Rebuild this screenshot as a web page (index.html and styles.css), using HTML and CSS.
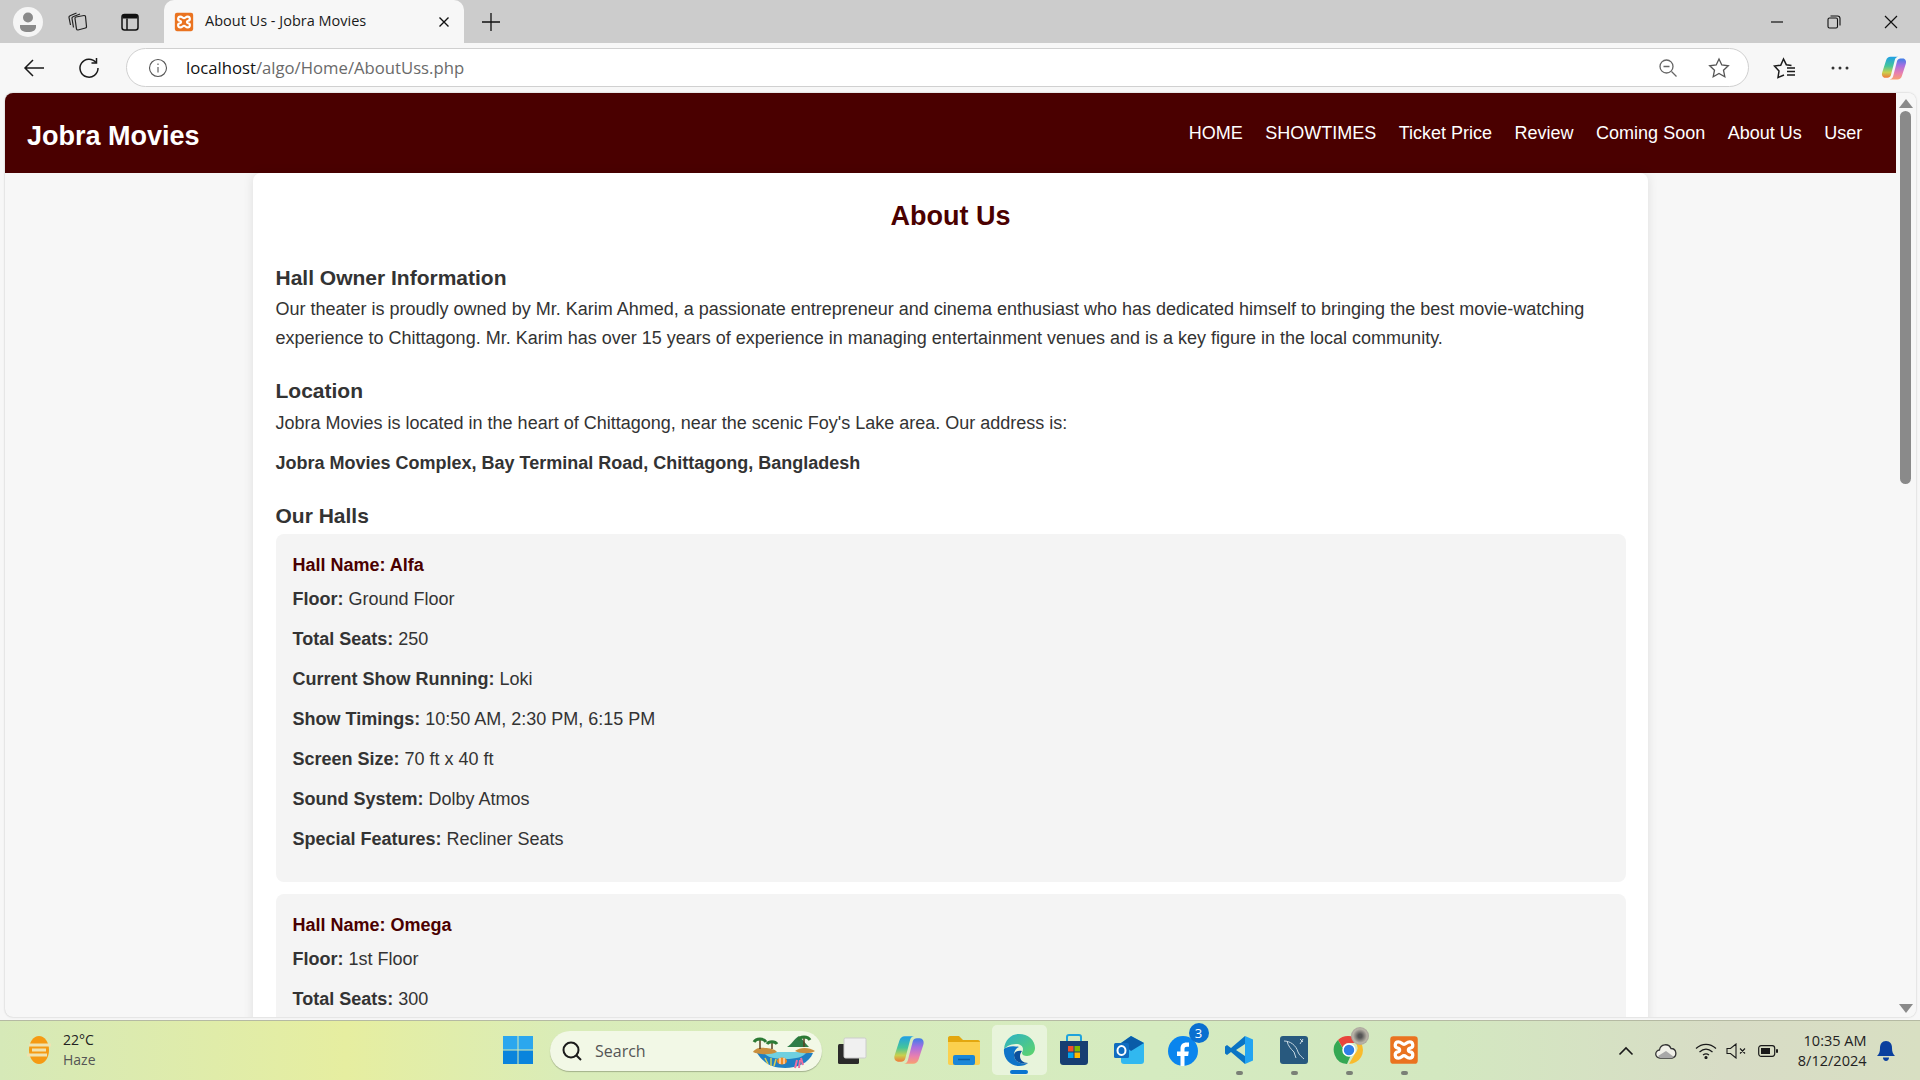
FILE: index.html
```html
<!DOCTYPE html>
<html lang="en">
<head>
    <meta charset="UTF-8">
    <meta name="viewport" content="width=device-width, initial-scale=1.0">
    <title>About Us - Jobra Movies</title>
    <link rel="stylesheet" href="styles.css">
</head>
<body>
    <svg class="defs" width="0" height="0">
        <defs>
            <symbol id="xampp" viewBox="0 0 24 24">
                <rect x="1" y="1" width="22" height="22" rx="2.500" fill="#ea7320"/>
                <path d="M7.500 5.500c2.500 0 2.800 2 4.500 2s2-2 4.500-2c3 0 3.500 4.500.5 5-1 .2-1.500.7-1.500 1.500s.5 1.300 1.500 1.500c3 .5 2.500 5-.5 5-2.500 0-2.800-2-4.500-2s-2 2-4.500 2c-3 0-3.500-4.500-.5-5 1-.2 1.500-.7 1.500-1.500s-.5-1.300-1.500-1.500c-3-.5-2.500-5 .5-5z" fill="none" stroke="#fff" stroke-width="2.600"/>
            </symbol>
            <linearGradient id="copA" x1="0" y1="0" x2="0" y2="1">
                <stop offset="0" stop-color="#1f9fe6"/><stop offset=".45" stop-color="#45c59a"/><stop offset=".75" stop-color="#c8d14e"/><stop offset="1" stop-color="#f07a3a"/>
            </linearGradient>
            <linearGradient id="copB" x1="0" y1="0" x2="0" y2="1">
                <stop offset="0" stop-color="#3d7fe8"/><stop offset=".35" stop-color="#a86fe0"/><stop offset=".7" stop-color="#e87fb0"/><stop offset="1" stop-color="#f8a070"/>
            </linearGradient>
            <symbol id="copilot" viewBox="0 0 32 32">
                <path d="M12 3h9c-2 0-3.500 1.500-4 3.500L12.500 24c-.6 2-2 3-4 3H6c-3 0-4.500-3-3.500-6L7 7c.7-2.500 2.500-4 5-4z" fill="url(#copA)"/>
                <path d="M20 29h-9c2 0 3.500-1.500 4-3.500L19.500 8c.6-2 2-3 4-3H26c3 0 4.500 3 3.500 6L25 25c-.7 2.500-2.500 4-5 4z" fill="url(#copB)"/>
            </symbol>
        </defs>
    </svg>

    <div class="desktop">
        <!-- Tab strip -->
        <div class="tabstrip">
            <div class="strip-btn">
                <svg width="30" height="30" viewBox="0 0 30 30"><circle cx="15" cy="15" r="15" fill="#f5f5f5"/><circle cx="15" cy="10.500" r="5" fill="#8a8a8a"/><path d="M7 18h16v2c0 3-3 5-8 5s-8-2-8-5z" fill="#8a8a8a"/></svg>
            </div>
            <div class="strip-btn strip-narrow">
                <svg width="22" height="22" viewBox="0 0 22 22" fill="none" stroke="#222" stroke-width="1.200"><path d="M10 6l8-1.500c.8-.1 1.300.3 1.500 1l1 10c.1.800-.3 1.300-1 1.500L12 19c-.8.1-1.300-.3-1.500-1L9 7.500c-.1-.8.3-1.300 1-1.500z"/><path d="M7.500 16.500 6 7.500C5.900 6.500 6.300 6 7 5.800L14 3M4.500 14 3 6.500C2.900 5.500 3.300 5 4 4.800L10.500 2"/></svg>
            </div>
            <div class="strip-btn">
                <svg width="20" height="20" viewBox="0 0 20 20" fill="none" stroke="#111" stroke-width="1.500"><rect x="2" y="2.500" width="16" height="15.500" rx="2.500"/><path d="M7 6.500V18"/><path d="M2.500 3h15v3.500h-15z" fill="#111" stroke="none"/></svg>
            </div>
            <div class="tab">
                <svg class="favicon" width="20" height="20"><use href="#xampp"/></svg>
                <span class="tab-title">About Us - Jobra Movies</span>
                <svg width="12" height="12" viewBox="0 0 12 12" stroke="#111" stroke-width="1.400"><path d="M1.500 1.500l9 9M10.500 1.500l-9 9"/></svg>
            </div>
            <div class="strip-btn strip-new">
                <svg width="20" height="20" viewBox="0 0 20 20" stroke="#111" stroke-width="1.300"><path d="M10 1v18M1 10h18"/></svg>
            </div>
            <div class="window-controls">
                <div class="win-btn"><svg width="14" height="14" viewBox="0 0 14 14" stroke="#111" stroke-width="1.200"><path d="M1 7h12"/></svg></div>
                <div class="win-btn"><svg width="14" height="14" viewBox="0 0 14 14" fill="none" stroke="#111" stroke-width="1.100"><rect x="1" y="3" width="9.500" height="10" rx="1.500"/><path d="M3.500 1h7c1.500 0 2.500 1 2.500 2.500v7"/></svg></div>
                <div class="win-btn"><svg width="14" height="14" viewBox="0 0 14 14" stroke="#111" stroke-width="1.200"><path d="M1 1l12 12M13 1 1 13"/></svg></div>
            </div>
        </div>

        <!-- Address bar -->
        <div class="toolbar">
            <div class="tool-btn">
                <svg width="22" height="20" viewBox="0 0 22 20" fill="none" stroke="#1a1a1a" stroke-width="1.500"><path d="M21 10H2M10 2l-8 8 8 8"/></svg>
            </div>
            <div class="tool-btn">
                <svg width="22" height="22" viewBox="0 0 22 22" fill="none" stroke="#1a1a1a" stroke-width="1.500"><path d="M18 5.500A9 9 0 1 0 20 11"/><path d="M18.500 1v5h-5"/></svg>
            </div>
            <div class="omnibox">
                <svg class="omni-info" width="20" height="20" viewBox="0 0 20 20" fill="none" stroke="#555" stroke-width="1.100"><circle cx="10" cy="10" r="8.500"/><path d="M10 9v5.500M10 5.500v1.500"/></svg>
                <span class="url"><span class="url-host">localhost</span>/algo/Home/AboutUss.php</span>
                <svg class="omni-zoom" width="20" height="20" viewBox="0 0 20 20" fill="none" stroke="#666" stroke-width="1.300"><circle cx="8.500" cy="8.500" r="6.500"/><path d="M5.500 8.500h6M13.500 13.500l5 5"/></svg>
                <svg class="omni-star" width="22" height="22" viewBox="0 0 22 22" fill="none" stroke="#555" stroke-width="1.300"><path d="M11 2l2.800 6 6.500.8-4.800 4.400 1.300 6.500L11 16.400l-5.800 3.300 1.300-6.500L1.700 8.800 8.200 8z"/></svg>
            </div>
            <div class="tool-btn">
                <svg width="24" height="22" viewBox="0 0 24 22" fill="none" stroke="#1a1a1a" stroke-width="1.500"><path d="M11 18l-6 2.500 1-6.500-4.500-5 6.200-.8L10.500 2l2.800 5.700 5.200.8"/><path d="M14 11h8M14 14.500h8M14 18h8"/></svg>
            </div>
            <div class="tool-btn">
                <svg width="18" height="4" viewBox="0 0 18 4" fill="#333"><circle cx="2" cy="2" r="1.500"/><circle cx="9" cy="2" r="1.500"/><circle cx="16" cy="2" r="1.500"/></svg>
            </div>
            <div class="tool-btn tool-last">
                <svg width="28" height="28"><use href="#copilot"/></svg>
            </div>
        </div>

        <!-- Browser page -->
        <div class="viewport">
            <div class="page">
                <nav class="navbar">
                    <div class="logo">Jobra Movies</div>
                    <ul class="nav-links">
                        <li>HOME</li>
                        <li>SHOWTIMES</li>
                        <li>Ticket Price</li>
                        <li>Review</li>
                        <li>Coming Soon</li>
                        <li>About Us</li>
                        <li>User</li>
                    </ul>
                </nav>

                <div class="container">
                    <h1>About Us</h1>

                    <h2>Hall Owner Information</h2>
                    <p>Our theater is proudly owned by Mr. Karim Ahmed, a passionate entrepreneur and cinema enthusiast who has dedicated himself to bringing the best movie-watching experience to Chittagong. Mr. Karim has over 15 years of experience in managing entertainment venues and is a key figure in the local community.</p>

                    <h2>Location</h2>
                    <p>Jobra Movies is located in the heart of Chittagong, near the scenic Foy's Lake area. Our address is:</p>
                    <p><strong>Jobra Movies Complex, Bay Terminal Road, Chittagong, Bangladesh</strong></p>

                    <h2>Our Halls</h2>
                    <div class="hall-card">
                        <h3>Hall Name: Alfa</h3>
                        <p><strong>Floor:</strong> Ground Floor</p>
                        <p><strong>Total Seats:</strong> 250</p>
                        <p><strong>Current Show Running:</strong> Loki</p>
                        <p><strong>Show Timings:</strong> 10:50 AM, 2:30 PM, 6:15 PM</p>
                        <p><strong>Screen Size:</strong> 70 ft x 40 ft</p>
                        <p><strong>Sound System:</strong> Dolby Atmos</p>
                        <p><strong>Special Features:</strong> Recliner Seats</p>
                    </div>
                    <div class="hall-card">
                        <h3>Hall Name: Omega</h3>
                        <p><strong>Floor:</strong> 1st Floor</p>
                        <p><strong>Total Seats:</strong> 300</p>
                    </div>
                </div>
            </div>

            <div class="scrollbar">
                <div class="arrow-up"></div>
                <div class="thumb"></div>
                <div class="arrow-down"></div>
            </div>
        </div>

        <!-- Windows taskbar -->
        <div class="taskbar">
            <div class="weather">
                <svg width="28" height="32" viewBox="0 0 28 32"><ellipse cx="14" cy="16" rx="10" ry="14" fill="#f59a13"/><path d="M4 11h22M7 16h14M2 21h20" stroke="#f0e3b0" stroke-width="3"/></svg>
                <div class="weather-text">
                    <span>22°C</span>
                    <span class="weather-sub">Haze</span>
                </div>
            </div>

            <div class="task-center">
                <div class="task-icon">
                    <svg width="30" height="30" viewBox="0 0 30 30"><path d="M0 1h14.500v13.500H0zM15.500 1H30v13.500H15.500z" fill="#2ba7ee"/><path d="M0 15.500h14.500V29H0zM15.500 15.500H30V29H15.500z" fill="#0a84dc"/></svg>
                </div>
                <div class="searchbox">
                    <svg width="22" height="22" viewBox="0 0 22 22" fill="none" stroke="#1b1b1b" stroke-width="2"><circle cx="10" cy="10" r="7.500"/><path d="M15 15l5 5"/></svg>
                    <span class="search-label">Search</span>
                    <svg class="search-art" width="66" height="36" viewBox="0 0 66 36">
                        <path d="M6 20c8 12 16 15 28 15s24-5 28-15z" fill="#1f7fc4"/>
                        <path d="M12 19h44c-4 5-10 7-22 7s-18-2-22-7z" fill="#6fd0e0"/>
                        <path d="M2 19c2-4 8-5 12-4 4 0 10 1 12 4-6 3-18 3-24 0z" fill="#c98f3e"/>
                        <path d="M44 18c5-4 14-4 20 0-4 3-14 3-20 0z" fill="#c98f3e"/>
                        <path d="M36 14c4-2 8-9 12-11 3 3 7 8 10 11z" fill="#2f7d4a"/>
                        <path d="M9 16V7M21 16V9M53 14V5" stroke="#5a4020" stroke-width="1.500"/>
                        <path d="M3 9c2-4 10-4 12 0M16 11c2-3 8-3 10 0M47 7c2-4 10-4 12 0" stroke="#2c7a35" stroke-width="3" fill="none"/>
                        <ellipse cx="31" cy="28" rx="5" ry="3.500" fill="#f08a24"/>
                        <path d="M29 25v6M33 25v6" stroke="#fff" stroke-width="1"/>
                        <path d="M44 35l2-8M48 35l1-8M52 32l-2-7" stroke="#ef6fa0" stroke-width="2" fill="none"/>
                        <path d="M17 31l-3-6M20 33v-8M23 33l2-7" stroke="#d8cf55" stroke-width="1.500" fill="none"/>
                    </svg>
                </div>
                <div class="task-icon task-view">
                    <svg width="30" height="30" viewBox="0 0 30 30"><rect x="1" y="9" width="21" height="20" rx="1.500" fill="#2a2a2a"/><rect x="7" y="3" width="22" height="20" rx="1.500" fill="#f0f0f0" stroke="#ccc"/></svg>
                </div>
                <div class="task-icon">
                    <svg width="34" height="34"><use href="#copilot"/></svg>
                </div>
                <div class="task-icon">
                    <svg width="34" height="30" viewBox="0 0 34 30"><path d="M1 3c0-1 .7-2 2-2h9l4 4h15c1.200 0 2 .800 2 2v2H1z" fill="#e3a70f"/><path d="M1 7h32v21c0 1-.800 2-2 2H3c-1.200 0-2-1-2-2z" fill="#fbd04e"/><rect x="6" y="20" width="22" height="10" rx="2" fill="#1a87d8"/><path d="M11 24.500h12" stroke="#0c5fa3" stroke-width="1.500"/></svg>
                </div>
                <div class="task-icon task-active">
                    <svg width="34" height="34" viewBox="0 0 34 34">
                        <defs><linearGradient id="edgeG" x1="0" y1="0" x2="1" y2="1"><stop offset="0" stop-color="#2bb0c9"/><stop offset="1" stop-color="#5fd568"/></linearGradient></defs>
                        <path d="M2 16C3 7 9 1 17 1c9 0 16 6 16 14 0 5-4 8-8 8-3 0-5-1-5-3 0-1 1-2 1-4 0-3-3-5-7-5-6 0-10 3-12 5z" fill="url(#edgeG)"/>
                        <path d="M2 16c-1 9 6 17 15 17 4 0 7-1 9-3-8 2-14-2-14-8 0-4 2-7 5-8-7-2-13 0-15 2z" fill="#0f74c8"/>
                        <path d="M12 22c0 6 6 10 14 8-5 0-8-3-8-7 0-2 1-4 2-5-4-1-8 1-8 4z" fill="#0b4f9c"/>
                    </svg>
                    <span class="active-bar"></span>
                </div>
                <div class="task-icon">
                    <svg width="30" height="32" viewBox="0 0 30 32"><path d="M8 8V3c0-1 1-2 2-2h10c1 0 2 1 2 2v5" fill="none" stroke="#1fa3dc" stroke-width="2"/><path d="M1 7h28v21c0 2-1.500 3-3 3H4c-1.500 0-3-1-3-3z" fill="#173e72"/><rect x="9" y="12" width="5.500" height="5.500" fill="#f2512a"/><rect x="15.500" y="12" width="5.500" height="5.500" fill="#7fba00"/><rect x="9" y="18.500" width="5.500" height="5.500" fill="#02a4ef"/><rect x="15.500" y="18.500" width="5.500" height="5.500" fill="#ffb900"/></svg>
                </div>
                <div class="task-icon">
                    <svg width="32" height="30" viewBox="0 0 32 30"><path d="M18 1l13 7v18c0 2-1 3-3 3H11c-2 0-3-1-3-3V8z" fill="#31b8f0"/><path d="M8 8l10-7 13 7-13 8z" fill="#0a5ca8"/><rect x="1" y="8" width="15" height="15" rx="1.500" fill="#0f6cc0"/><ellipse cx="8.500" cy="15.500" rx="4" ry="4.500" fill="none" stroke="#fff" stroke-width="2"/></svg>
                </div>
                <div class="task-icon">
                    <svg width="34" height="32" viewBox="0 0 34 32"><circle cx="16" cy="17" r="15" fill="#0a85ee"/><path d="M13.500 32V22H10v-4.500h3.500v-3c0-4 2.500-6 6-6h2.500v4.300h-2c-1.800 0-2.500.8-2.500 2.300v2.400h4.300l-.7 4.500H17.500V32z" fill="#fff"/></svg>
                    <span class="fb-badge">3</span>
                </div>
                <div class="task-icon task-open">
                    <svg width="30" height="30" viewBox="0 0 30 30"><path d="M21 1l8 3.500v21L21 29z" fill="#22a4f2"/><path d="M21 1v8l-9 6 9 6v8L7 17l-4 3-2-1.500v-7L3 10l4 3z" fill="#0a74c4"/></svg>
                    <span class="open-dot"></span>
                </div>
                <div class="task-icon task-open">
                    <svg width="30" height="30" viewBox="0 0 30 30"><rect x="1" y="1" width="28" height="28" rx="3" fill="#28597e"/><path d="M5 6c6 0 12 4 14 11 1 3 4 5 6 7M8 6c1 5 4 8 7 11 1 2 1 4 2 6M21 4l3 3M24 4l-3 5" fill="none" stroke="#c5d6e0" stroke-width="1"/></svg>
                    <span class="open-dot"></span>
                </div>
                <div class="task-icon task-open">
                    <svg width="32" height="32" viewBox="0 0 32 32"><path d="M16 2a14 14 0 0 1 12.100 7H16a7 7 0 0 0-6.500 4.500L5 6A14 14 0 0 1 16 2z" fill="#e8453c"/><path d="M28.100 9A14 14 0 0 1 16 30l6-10.500A7 7 0 0 0 22.500 9z" fill="#f9bb2d"/><path d="M5 6l6 10.500a7 7 0 0 0 7.500 3.200L14 30A14 14 0 0 1 5 6z" fill="#34a853"/><circle cx="16" cy="16" r="6" fill="#2f7ee6" stroke="#fff" stroke-width="1.500"/></svg>
                    <span class="chrome-avatar"></span>
                    <span class="open-dot"></span>
                </div>
                <div class="task-icon task-open">
                    <svg width="30" height="30"><use href="#xampp"/></svg>
                    <span class="open-dot"></span>
                </div>
            </div>

            <div class="tray">
                <svg width="16" height="10" viewBox="0 0 16 10" fill="none" stroke="#1a1a1a" stroke-width="1.600"><path d="M1.500 8.500 8 2l6.500 6.500"/></svg>
                <svg class="tray-cloud" width="22" height="16" viewBox="0 0 22 16"><path d="M5 15a4 4 0 0 1-.500-8A6 6 0 0 1 16 5.500 4.800 4.800 0 0 1 17 15z" fill="#f0f0e8" stroke="#333" stroke-width="1.300"/><path d="M3 13l8-5 8 6-2 1H5z" fill="#a8a8a8"/></svg>
                <svg class="tray-wifi" width="22" height="16" viewBox="0 0 22 16" fill="none" stroke="#1a1a1a" stroke-width="1.200"><path d="M1 5.500c6-5.500 14-5.500 20 0M4.500 9c4-3.500 9-3.500 13 0M8 12c2-1.500 4-1.500 6 0"/><circle cx="11" cy="14.500" r="1" fill="#1a1a1a"/></svg>
                <svg width="22" height="16" viewBox="0 0 22 16" fill="none" stroke="#1a1a1a" stroke-width="1.100"><path d="M1 5.500h3.500L10 1v14l-5.500-4.500H1zM14 5.500l5 5M19 5.500l-5 5"/></svg>
                <svg class="tray-battery" width="20" height="12" viewBox="0 0 20 12"><rect x=".7" y=".7" width="16" height="10.600" rx="2.500" fill="none" stroke="#1a1a1a" stroke-width="1.200"/><rect x="3" y="3" width="9" height="6" fill="#1a1a1a"/><rect x="18" y="4" width="2" height="4" rx="1" fill="#1a1a1a"/></svg>
                <div class="clock">
                    <span>10:35 AM</span>
                    <span>8/12/2024</span>
                </div>
                <svg width="18" height="20" viewBox="0 0 18 20" fill="#0a3f9e"><path d="M9 0c-4 0-6 3-6 7 0 4-1 6-3 8h18c-2-2-3-4-3-8 0-4-2-7-6-7z"/><path d="M6 16.500h6c0 2-1.300 3.500-3 3.500s-3-1.500-3-3.500z"/></svg>
            </div>
        </div>
    </div>
</body>
</html>
```

FILE: styles.css
```css
* {
    box-sizing: border-box;
}
html, body {
    margin: 0;
    height: 100%;
    overflow: hidden;
}
body {
    font-family: "Liberation Sans", Arial, sans-serif;
    color: #333;
}
.defs {
    position: absolute;
}
.desktop {
    display: flex;
    flex-direction: column;
    height: 1080px;
    background-color: #f7f7f7;
}

/* Tab strip */
.tabstrip {
    display: flex;
    align-items: center;
    height: 43px;
    flex-shrink: 0;
    padding-left: 3px;
    background-color: #cccccc;
}
.strip-btn {
    display: flex;
    align-items: center;
    justify-content: center;
    width: 50px;
}
.strip-narrow {
    width: 47px;
    margin-right: 5px;
}
.strip-new {
    width: 44px;
    margin-left: 5px;
}
.tab {
    display: flex;
    align-items: center;
    width: 300px;
    height: 43px;
    margin-left: 9px;
    padding: 0 14px 0 10px;
    background-color: #f7f7f7;
    border-radius: 10px 10px 0 0;
    font-family: "Open Sans", sans-serif;
    font-size: 14.5px;
    color: #1a1a1a;
}
.tab-title {
    flex: 1;
    margin: 0 0 2px 11px;
}
.window-controls {
    display: flex;
    margin-left: auto;
    padding-right: 1px;
}
.win-btn {
    display: flex;
    align-items: center;
    justify-content: center;
    width: 57px;
    height: 43px;
}

/* Address bar */
.toolbar {
    display: flex;
    align-items: center;
    height: 50px;
    flex-shrink: 0;
    padding: 0 0 1px 6px;
}
.tool-btn {
    display: flex;
    align-items: center;
    justify-content: center;
    width: 55px;
    height: 39px;
}
.tool-last {
    width: 53px;
}
.omnibox {
    display: flex;
    align-items: center;
    flex: 1;
    height: 39px;
    margin: 0 8px 0 10px;
    padding: 0 18px 0 21px;
    background-color: #fff;
    border: 1px solid #d0d0d0;
    border-radius: 20px;
}
.url {
    flex: 1;
    margin-left: 18px;
    font-family: "Open Sans", sans-serif;
    font-size: 16.7px;
    color: #6a6a6a;
}
.url-host {
    color: #111;
}
.omni-zoom {
    margin-right: 30px;
}

/* Browser page */
.viewport {
    display: flex;
    flex: 1;
    min-height: 0;
    margin: 0 4px 3px 5px;
    background-color: #f7f7f7;
    border-radius: 8px;
    overflow: hidden;
    box-shadow: 0 0 2px rgba(0, 0, 0, 0.25);
}
.page {
    flex: 1;
    min-width: 0;
    overflow: hidden;
}
.navbar {
    display: flex;
    justify-content: space-between;
    align-items: flex-start;
    height: 80px;
    padding: 22px 22.5px 0 22px;
    background-color: #4a0000;
    color: #fff;
}
.logo {
    font-size: 27px;
    font-weight: bold;
    line-height: 43px;
}
.nav-links {
    display: flex;
    margin: 0;
    padding: 4px 0 0;
    list-style: none;
    font-size: 18px;
    line-height: 29px;
}
.nav-links li {
    padding: 0 11.25px;
}
.container {
    width: 1395px;
    margin: 0 auto;
    padding: 22px 22.5px;
    background-color: #fff;
    border-radius: 8px;
    box-shadow: 0 0 11px rgba(0, 0, 0, 0.1);
    font-size: 18px;
    line-height: 28.8px;
}
h1 {
    margin: 0 0 24px;
    font-size: 27px;
    line-height: 43px;
    text-align: center;
    color: #4a0000;
}
h2 {
    margin: 22.5px 0 1.4px;
    font-size: 21px;
    line-height: 32px;
}
h1 + h2 {
    margin-top: 0;
}
h3 {
    margin: 0 0 5.6px;
    font-size: 18px;
    line-height: 28.8px;
    color: #4a0000;
}
p {
    margin: 0 0 11.25px;
}
.hall-card {
    margin-bottom: 11.25px;
    padding: 17px;
    background-color: #f4f4f4;
    border-radius: 8px;
}

/* Scrollbar */
.scrollbar {
    display: flex;
    flex-direction: column;
    align-items: center;
    width: 20px;
    flex-shrink: 0;
    padding: 6px 1px 4px 0;
    background-color: #f7f7f7;
}
.arrow-up {
    width: 0;
    height: 0;
    border: 7px solid transparent;
    border-top: 0;
    border-bottom: 9px solid #8a8a8a;
}
.arrow-down {
    width: 0;
    height: 0;
    margin-top: auto;
    border: 7px solid transparent;
    border-bottom: 0;
    border-top: 9px solid #8a8a8a;
}
.thumb {
    width: 11px;
    height: 373px;
    margin-top: 3px;
    background-color: #8a8a8a;
    border-radius: 6px;
}

/* Taskbar */
.taskbar {
    display: grid;
    grid-template-columns: 1fr auto 1fr;
    align-items: center;
    height: 60px;
    flex-shrink: 0;
    border-top: 1px solid #b5baa3;
    background: linear-gradient(90deg, #d6e9b8 0%, #e6eea0 18%, #d9ecb9 30%, #d5ebc0 60%, #d3e8c0 75%, #d8dcc6 90%, #d8dfc2 100%);
    font-family: "Open Sans", sans-serif;
}
.weather {
    display: flex;
    align-items: center;
    gap: 10px;
    padding: 0 0 2px 25px;
    font-size: 14px;
    line-height: 20px;
    color: #222;
}
.weather-text {
    display: flex;
    flex-direction: column;
}
.weather-sub {
    color: #555;
}
.task-center {
    display: flex;
    align-items: center;
    padding-left: 2px;
}
.task-icon {
    position: relative;
    display: flex;
    align-items: center;
    justify-content: center;
    width: 55px;
    height: 50px;
    margin-bottom: 1px;
}
.task-view {
    margin-right: 2px;
}
.task-active {
    background-color: rgba(255, 255, 255, 0.45);
    border-radius: 5px;
}
.active-bar {
    position: absolute;
    bottom: 1px;
    width: 18px;
    height: 4px;
    border-radius: 2px;
    background-color: #0a74d0;
}
.open-dot {
    position: absolute;
    bottom: 0;
    width: 7px;
    height: 4px;
    border-radius: 2px;
    background-color: #7a8076;
}
.fb-badge {
    position: absolute;
    top: -2px;
    right: 3px;
    width: 20px;
    height: 20px;
    border-radius: 50%;
    background-color: #0a6fd0;
    color: #fff;
    font-size: 13px;
    line-height: 20px;
    text-align: center;
}
.chrome-avatar {
    position: absolute;
    top: 2px;
    right: 8px;
    width: 18px;
    height: 18px;
    border-radius: 50%;
    background: radial-gradient(circle, #555 15%, #b9b4a8 55%, #8d8a83 100%);
}
.searchbox {
    display: flex;
    align-items: center;
    width: 272px;
    height: 40px;
    margin: 0 2.5px 0 4.5px;
    padding: 0 5px 0 11px;
    background-color: #f2f8e6;
    border-radius: 20px;
    box-shadow: 0 1px 1px rgba(0, 0, 0, 0.25);
}
.search-label {
    flex: 1;
    margin-left: 12px;
    font-size: 16px;
    color: #555;
}
.tray {
    display: flex;
    align-items: center;
    justify-content: flex-end;
    gap: 13px;
    padding-right: 25px;
    color: #222;
}
.tray-cloud {
    margin: 0 5.5px 0 8px;
}
.tray-wifi {
    margin-right: -4px;
}
.tray-battery {
    margin-left: -3.5px;
}
.clock {
    display: flex;
    flex-direction: column;
    align-items: flex-end;
    margin: 0 -2.5px 0 7px;
    font-size: 14.5px;
    line-height: 20px;
}
```
